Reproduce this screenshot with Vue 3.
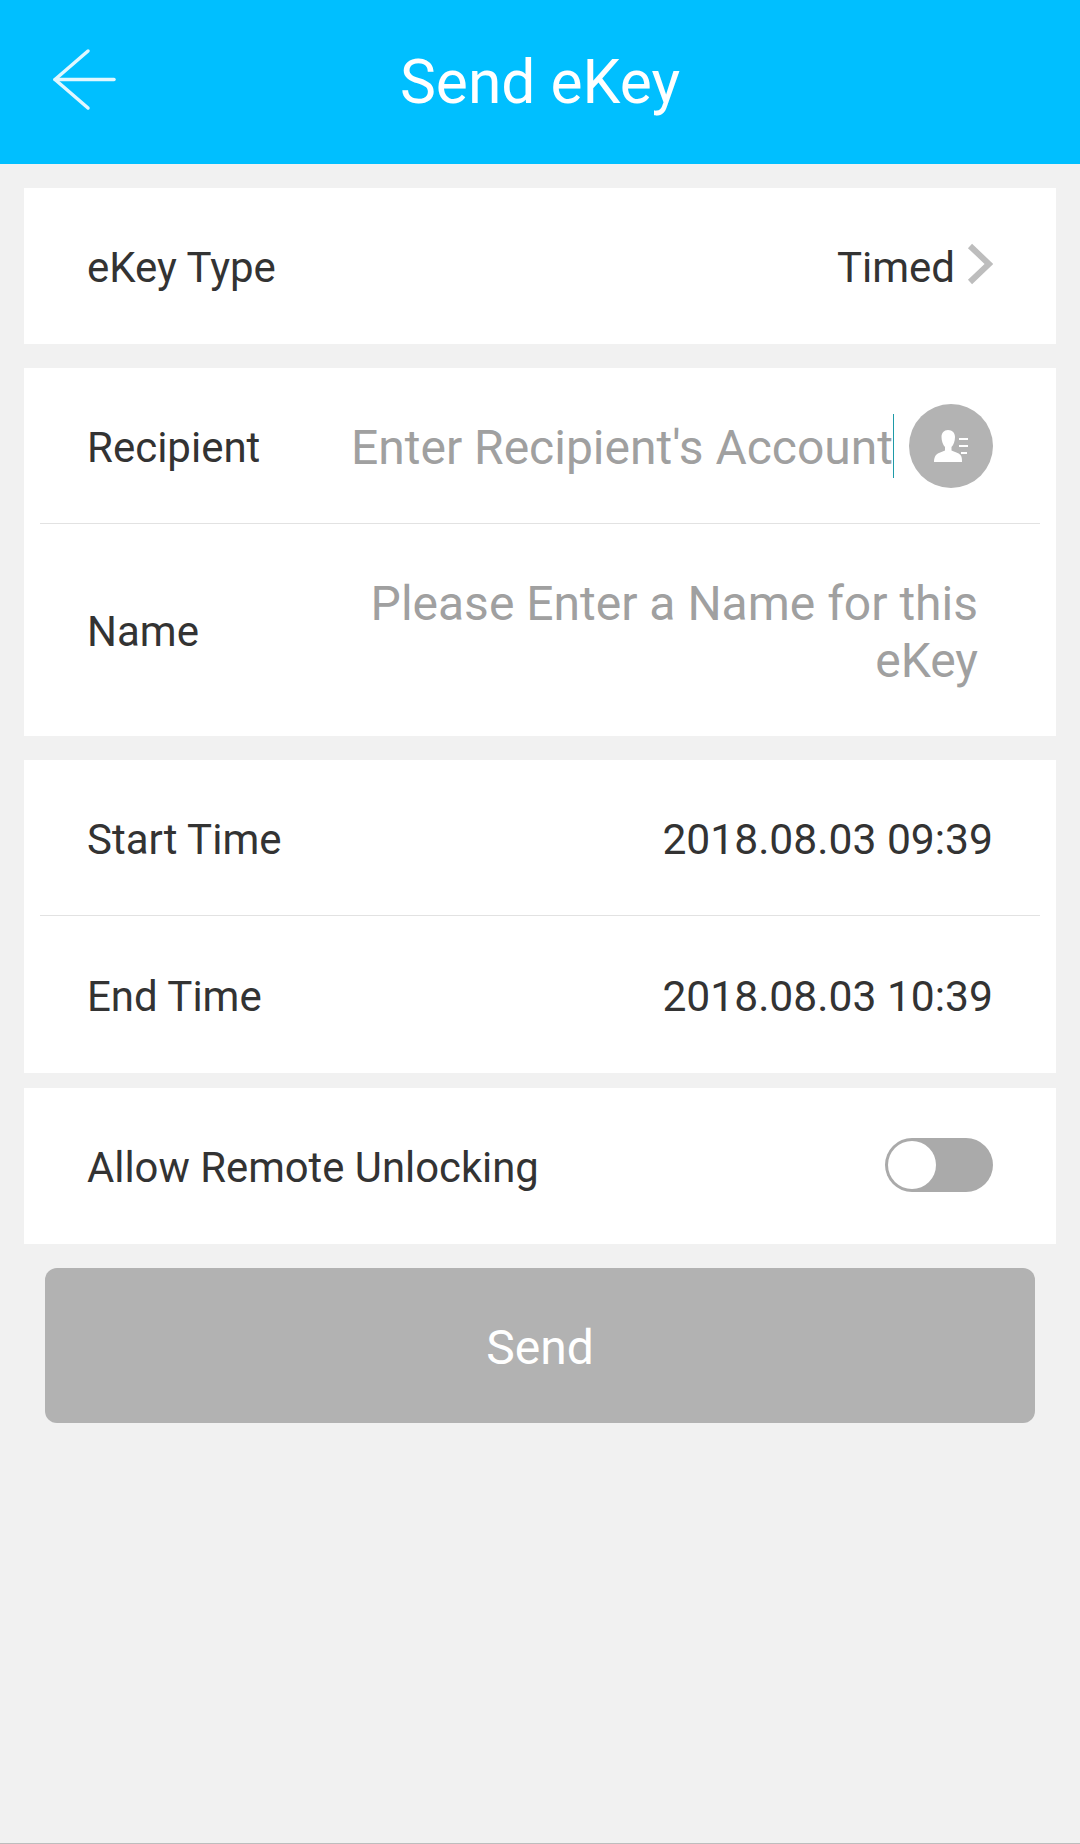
<template>
  <div class="page">
    <div class="header">
      <svg class="back" width="67" height="65" viewBox="0 0 67 65" fill="none" stroke="#e0f7ff" stroke-width="3.500" stroke-linecap="round" stroke-linejoin="round">
        <path d="M36 4 L3 32.500 L36 61" />
        <path d="M3 32.500 H62" />
      </svg>
      <h1>Send eKey</h1>
    </div>

    <div class="card first">
      <div class="row">
        <span class="label">eKey Type</span>
        <span class="value">Timed</span>
        <svg class="arrow" width="26" height="42" viewBox="0 0 26 42" fill="none" stroke="#bdbdbd" stroke-width="6">
          <path d="M3 3 L22 21 L3 39" />
        </svg>
      </div>
    </div>

    <div class="card low">
      <div class="row">
        <span class="label">Recipient</span>
        <span class="placeholder recipient">Enter Recipient's Account</span>
        <span class="caret"></span>
        <div class="contact">
          <svg width="34" height="32" viewBox="0 0 34 32" fill="#fff">
            <path d="M14 0c4.500 0 7 3 7 7 0 4-1.500 8-3.500 10v3.500c3 1.500 7 2 9 4.500 1.500 2 1.500 4 1.500 7H0c0-3 .5-5 2-7 2-2.500 6-3 9-4.500V17C9 15 7.500 11 7.500 7c0-4 2.500-7 6.500-7z" />
            <rect x="25" y="8" width="9" height="2" />
            <rect x="25" y="15" width="9" height="2" />
            <rect x="27" y="22" width="6" height="2" />
          </svg>
        </div>
      </div>
      <div class="divider"></div>
      <div class="row name-row">
        <span class="label">Name</span>
        <span class="placeholder name">Please Enter a Name for this eKey</span>
      </div>
    </div>

    <div class="card low">
      <div class="row">
        <span class="label">Start Time</span>
        <span class="value date">{{ startTime }}</span>
      </div>
      <div class="divider"></div>
      <div class="row end-row">
        <span class="label">End Time</span>
        <span class="value date">{{ endTime }}</span>
      </div>
    </div>

    <div class="card remote">
      <div class="row tall">
        <span class="label">Allow Remote Unlocking</span>
        <div class="switch">
          <div class="knob"></div>
        </div>
      </div>
    </div>

    <button class="send">Send</button>
  </div>
</template>

<script setup>
const startTime = '2018.08.03 09:39'
const endTime = '2018.08.03 10:39'
</script>

<style>
html,
body {
  margin: 0;
  background: #f1f1f1;
}
</style>

<style scoped>
.page {
  height: 1844px;
  box-sizing: border-box;
  background: #f1f1f1;
  border-bottom: 1px solid #bdbdbd;
  font-family: Roboto, "Liberation Sans", sans-serif;
  overflow: hidden;
}
.header {
  height: 164px;
  background: #00bfff;
  display: flex;
  align-items: center;
  justify-content: center;
  position: relative;
}
.header h1 {
  margin: 0;
  color: #fff;
  font-size: 60.500px;
  font-weight: 400;
}
.back {
  position: absolute;
  left: 52px;
  top: 47px;
}
.card {
  margin: 24px 24px 0;
  background: #fff;
}
.card.remote {
  margin-top: 15px;
}
.card.remote .label {
  font-size: 41.800px;
}
.card.first .row {
  height: 156px;
}
.row {
  height: 155px;
  box-sizing: border-box;
  padding: 0 63px;
  display: flex;
  align-items: center;
  font-size: 42px;
  color: #333;
}
.row.tall {
  height: 156px;
}
.row.name-row {
  height: 212px;
}
.row.end-row {
  height: 157px;
}
.divider {
  height: 1px;
  margin: 0 16px;
  background: #e2e2e2;
}
.label {
  flex: none;
  padding-top: 2px;
}
.low .label {
  padding-top: 4px;
}
.low .name-row .label {
  padding-top: 2px;
}
.value {
  margin-left: auto;
  padding-top: 2px;
}
.date {
  font-size: 42.600px;
}
.arrow {
  margin-left: 12px;
  margin-top: -4px;
}
.placeholder {
  color: #a0a0a0;
  font-size: 48px;
  padding-top: 4px;
}
.recipient {
  margin-left: auto;
  white-space: nowrap;
}
.caret {
  width: 1px;
  height: 64px;
  background: #1e9aa8;
}
.contact {
  width: 84px;
  height: 84px;
  margin-left: 15px;
  flex: none;
  border-radius: 50%;
  background: #b3b3b3;
  display: flex;
  align-items: center;
  justify-content: center;
}
.name {
  margin-left: auto;
  margin-right: 15px;
  width: 620px;
  text-align: right;
  line-height: 57px;
}
.switch {
  margin-left: auto;
  margin-top: -2px;
  width: 108px;
  height: 54px;
  box-sizing: border-box;
  padding: 3px;
  border-radius: 27px;
  background: #aaa;
}
.knob {
  width: 48px;
  height: 48px;
  border-radius: 50%;
  background: #fff;
}
.send {
  display: block;
  width: 990px;
  height: 155px;
  margin: 24px 0 0 45px;
  padding-top: 5px;
  border: none;
  border-radius: 12px;
  background: #b2b2b2;
  color: #fff;
  font-family: inherit;
  font-size: 48px;
}
</style>
